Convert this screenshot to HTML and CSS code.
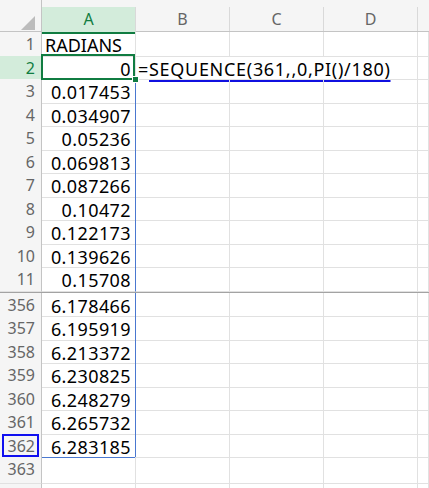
FILE: index.html
```html
<!DOCTYPE html>
<html lang="en">
<head>
    <meta charset="UTF-8">
    <meta name="viewport" content="width=device-width, initial-scale=1.0">
    <title>Radians sheet</title>
    <link rel="stylesheet" href="styles.css">
</head>
<body>
    <div class="sheet">
        <div class="row head-row">
            <div class="corner">
                <svg width="14" height="14" viewBox="0 0 14 14"><polygon points="14,0 14,14 0,14" fill="#bcbcbc"/></svg>
            </div>
            <div class="col-head active">A</div>
            <div class="col-head">B</div>
            <div class="col-head">C</div>
            <div class="col-head">D</div>
            <div class="col-head last"></div>
        </div>

        <div class="row">
            <div class="row-num">1</div>
            <div class="cell text">RADIANS</div>
            <div class="cell"></div>
            <div class="cell"></div>
            <div class="cell"></div>
            <div class="cell"></div>
        </div>
        <div class="row">
            <div class="row-num active">2</div>
            <div class="cell num selected">0</div>
            <div class="cell formula">=<span class="ref">SEQUENCE(361,,0,PI()/180)</span></div>
            <div class="cell"></div>
        </div>
        <div class="row">
            <div class="row-num">3</div>
            <div class="cell num in-range">0.017453</div>
            <div class="cell"></div><div class="cell"></div><div class="cell"></div><div class="cell"></div>
        </div>
        <div class="row">
            <div class="row-num">4</div>
            <div class="cell num in-range">0.034907</div>
            <div class="cell"></div><div class="cell"></div><div class="cell"></div><div class="cell"></div>
        </div>
        <div class="row">
            <div class="row-num">5</div>
            <div class="cell num in-range">0.05236</div>
            <div class="cell"></div><div class="cell"></div><div class="cell"></div><div class="cell"></div>
        </div>
        <div class="row">
            <div class="row-num">6</div>
            <div class="cell num in-range">0.069813</div>
            <div class="cell"></div><div class="cell"></div><div class="cell"></div><div class="cell"></div>
        </div>
        <div class="row">
            <div class="row-num">7</div>
            <div class="cell num in-range">0.087266</div>
            <div class="cell"></div><div class="cell"></div><div class="cell"></div><div class="cell"></div>
        </div>
        <div class="row">
            <div class="row-num">8</div>
            <div class="cell num in-range">0.10472</div>
            <div class="cell"></div><div class="cell"></div><div class="cell"></div><div class="cell"></div>
        </div>
        <div class="row">
            <div class="row-num">9</div>
            <div class="cell num in-range">0.122173</div>
            <div class="cell"></div><div class="cell"></div><div class="cell"></div><div class="cell"></div>
        </div>
        <div class="row">
            <div class="row-num">10</div>
            <div class="cell num in-range">0.139626</div>
            <div class="cell"></div><div class="cell"></div><div class="cell"></div><div class="cell"></div>
        </div>
        <div class="row">
            <div class="row-num">11</div>
            <div class="cell num in-range">0.15708</div>
            <div class="cell"></div><div class="cell"></div><div class="cell"></div><div class="cell"></div>
        </div>

        <div class="freeze"></div>

        <div class="row">
            <div class="row-num">356</div>
            <div class="cell num in-range">6.178466</div>
            <div class="cell"></div><div class="cell"></div><div class="cell"></div><div class="cell"></div>
        </div>
        <div class="row">
            <div class="row-num">357</div>
            <div class="cell num in-range">6.195919</div>
            <div class="cell"></div><div class="cell"></div><div class="cell"></div><div class="cell"></div>
        </div>
        <div class="row">
            <div class="row-num">358</div>
            <div class="cell num in-range">6.213372</div>
            <div class="cell"></div><div class="cell"></div><div class="cell"></div><div class="cell"></div>
        </div>
        <div class="row">
            <div class="row-num">359</div>
            <div class="cell num in-range">6.230825</div>
            <div class="cell"></div><div class="cell"></div><div class="cell"></div><div class="cell"></div>
        </div>
        <div class="row">
            <div class="row-num">360</div>
            <div class="cell num in-range">6.248279</div>
            <div class="cell"></div><div class="cell"></div><div class="cell"></div><div class="cell"></div>
        </div>
        <div class="row">
            <div class="row-num">361</div>
            <div class="cell num in-range">6.265732</div>
            <div class="cell"></div><div class="cell"></div><div class="cell"></div><div class="cell"></div>
        </div>
        <div class="row">
            <div class="row-num marked">362</div>
            <div class="cell num in-range range-end">6.283185</div>
            <div class="cell"></div><div class="cell"></div><div class="cell"></div><div class="cell"></div>
        </div>
        <div class="row tall">
            <div class="row-num">363</div>
            <div class="cell"></div><div class="cell"></div><div class="cell"></div><div class="cell"></div><div class="cell"></div>
        </div>
        <div class="row">
            <div class="row-num"></div>
            <div class="cell"></div><div class="cell"></div><div class="cell"></div><div class="cell"></div><div class="cell"></div>
        </div>
    </div>
</body>
</html>
```

FILE: styles.css
```css
body {
    margin: 0;
    padding: 0;
    background-color: #ffffff;
    font-family: 'Noto Sans', 'Open Sans', sans-serif;
    overflow: hidden;
}
.sheet {
    width: 429px;
    height: 488px;
    overflow: hidden;
}
.row {
    display: grid;
    grid-template-columns: 42px 94px 94px 94px 94px 1fr;
    height: 23.5px;
}
.row.tall {
    height: 26.5px;
}
.head-row {
    height: 32px;
    background-color: #f5f5f5;
    box-sizing: border-box;
    border-bottom: 1px solid #c4c4c4;
}
.corner {
    border-right: 1px solid #c4c4c4;
    display: flex;
    justify-content: flex-end;
    align-items: flex-end;
    padding: 0 6px 4px 0;
}
.col-head {
    margin-top: 7px;
    height: 24px;
    line-height: 24px;
    text-align: center;
    font-size: 16px;
    color: #666666;
    border-right: 1px solid #d9d9d9;
}
.col-head.active {
    background-color: #d3ecdb;
    color: #107c41;
    height: 25px;
    border-bottom: 2px solid #107c41;
    line-height: 24px;
}
.col-head.last {
    border-right: none;
}
.row-num {
    box-sizing: border-box;
    background-color: #f5f5f5;
    border-right: 1px solid #c4c4c4;
    border-bottom: 1px solid #e1e1e1;
    color: #666666;
    font-size: 16px;
    text-align: right;
    padding: 1px 6px 0 0;
    line-height: 22.5px;
    position: relative;
}
.row-num.active {
    background-color: #d3ecdb;
    color: #107c41;
}
.row-num.marked::after {
    content: "";
    position: absolute;
    left: 2px;
    top: 0;
    right: 2px;
    bottom: 0;
    border: 2px solid #1010f0;
}
.cell {
    box-sizing: border-box;
    border-right: 1px solid #e1e1e1;
    border-bottom: 1px solid #e1e1e1;
    font-size: 18px;
    color: #000000;
    padding-top: 3px;
    line-height: 20px;
    white-space: nowrap;
    position: relative;
}
.cell.num {
    text-align: right;
    padding-right: 4px;
    letter-spacing: 0.4px;
}
.cell.text {
    padding-left: 3px;
    overflow: visible;
}
.cell.in-range {
    border-right-color: #4a78d0;
}
.cell.range-end {
    border-bottom-color: #4a78d0;
}
.cell.selected::after {
    content: "";
    position: absolute;
    left: -1px;
    top: -2px;
    right: 0;
    bottom: -1px;
    border: 2px solid #107c41;
    z-index: 1;
}
.cell.selected::before {
    content: "";
    position: absolute;
    right: -4px;
    bottom: -4px;
    width: 5px;
    height: 5px;
    background-color: #107c41;
    border: 1px solid #ffffff;
    z-index: 2;
}
.cell.formula {
    grid-column: span 3;
    padding-left: 2px;
    letter-spacing: 0.7px;
}
.ref {
    text-decoration: underline;
    text-decoration-color: #1010e0;
    text-decoration-thickness: 2px;
    text-underline-offset: 4px;
}
.freeze {
    height: 2px;
    background-color: #a3a3a3;
}
```
